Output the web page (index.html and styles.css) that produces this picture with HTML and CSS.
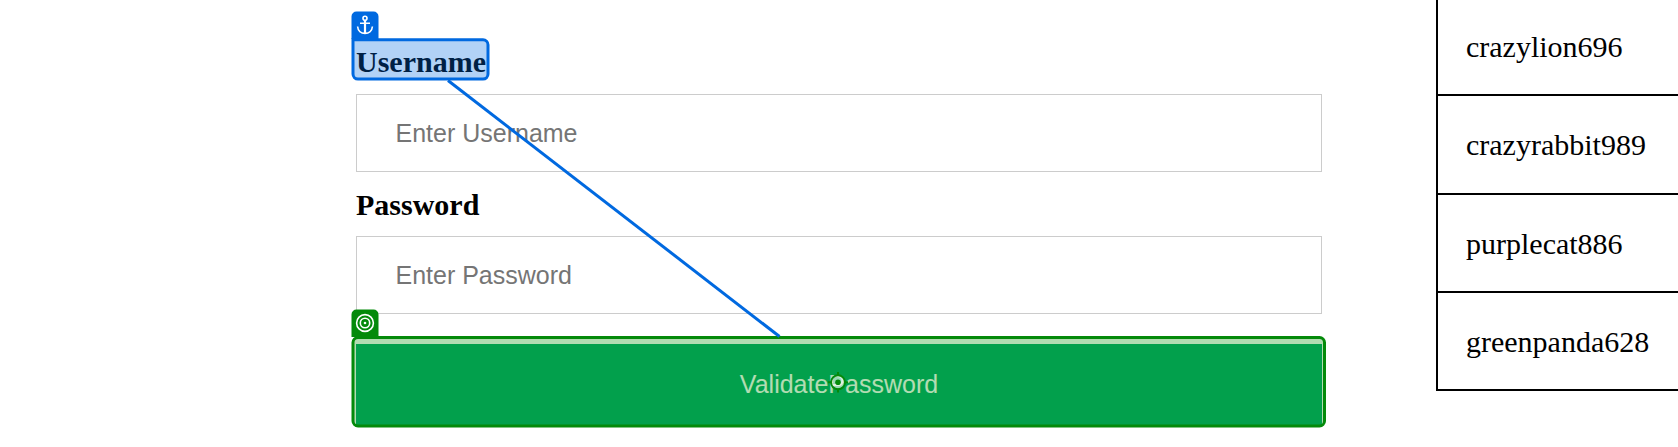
FILE: index.html
```
<!DOCTYPE html>
<html lang="en">
<head>
<meta charset="utf-8">
<title>Login</title>
<link rel="stylesheet" href="styles.css">
</head>
<body>
<main class="page">
  <form class="login">
    <label class="label" for="user">Username</label>
    <input class="field" id="user" type="text" placeholder="Enter Username">
    <label class="label" for="pass">Password</label>
    <input class="field" id="pass" type="password" placeholder="Enter Password">
    <button class="submit" type="button">ValidatePassword</button>
  </form>
  <div class="users">
    <div class="user user-first">crazylion696</div>
    <div class="user user-second">crazyrabbit989</div>
    <div class="user">purplecat886</div>
    <div class="user">greenpanda628</div>
  </div>
</main>
<svg class="overlay" width="1678" height="447" viewBox="0 0 1678 447">
  <!-- target highlight -->
  <rect class="target-box" x="353" y="337.5" width="971.5" height="88.5" rx="5"/>
  <path class="target-badge" d="M351.5 337v-22.500a5 5 0 0 1 5-5h17a5 5 0 0 1 5 5V337z"/>
  <g class="glyph">
    <circle cx="365" cy="323" r="8.400"/>
    <circle cx="365" cy="323" r="4.700"/>
    <circle class="dot" cx="365" cy="323" r="1.300"/>
  </g>
  <!-- anchor highlight -->
  <path class="anchor-box" d="M353 39.800h130a5 5 0 0 1 5 5v29.300a5 5 0 0 1-5 5H358a5 5 0 0 1-5-5z"/>
  <path class="anchor-badge" d="M351.500 39V16.500a5 5 0 0 1 5-5h17a5 5 0 0 1 5 5V39z"/>
  <g class="glyph">
    <circle cx="365" cy="18.300" r="2"/>
    <path class="stem" d="M365 20.500V33"/>
    <path d="M360 23.200h10M357.600 26.500c.3 4.300 3.400 6.900 7.400 6.900s7.100-2.600 7.400-6.900"/>
  </g>
  <path class="link" d="M448 80.500 779.500 336.500"/>
  <!-- click point -->
  <circle class="point" cx="838" cy="382.300" r="7"/>
  <path class="point-ticks" d="M838 372v4M838 388.500v4M828 382.300h4M844 382.300h4"/>
  <circle class="point-dot" cx="838" cy="382.300" r="2.800"/>
</svg>
</body>
</html>
```
FILE: styles.css
```
body {
  margin: 0;
  background: #fff;
  color: #000;
  font: 30px/34px "Liberation Serif", "Times New Roman", serif;
  overflow: hidden;
}
.page {
  display: flex;
  align-items: flex-start;
  gap: 114px;
  height: 447px;
  padding-left: 356px;
}
.login {
  display: flex;
  flex-direction: column;
  flex: 0 0 966px;
  padding-top: 30px;
}
.label {
  padding: 15px 0;
  font-weight: bold;
}
.label ~ .label { padding: 16px 0 14px; }
.field {
  box-sizing: border-box;
  height: 78px;
  margin: 0;
  padding: 0 38.500px;
  border: 1px solid #ccc;
  border-radius: 0;
  background: #fff;
  font: 25px "Liberation Sans", Arial, sans-serif;
}
.field::placeholder { color: #757575; }
.submit {
  height: 81.500px;
  margin: 30px 0 0;
  padding: 0;
  border: 0;
  background: #04aa6d;
  color: #fff;
  font: 25px "Liberation Sans", Arial, sans-serif;
}
.users {
  flex: 0 0 240px;
  border-left: 2px solid #000;
}
.user {
  box-sizing: border-box;
  height: 98px;
  padding: 32px 0 0 28px;
  border-bottom: 2px solid #000;
}
.user-first { height: 96px; padding-top: 30px; }
.user-second { height: 99px; }
.overlay {
  position: absolute;
  top: 0;
  left: 0;
  pointer-events: none;
}
.target-box { fill: rgba(0, 138, 0, .3); stroke: #048a0a; stroke-width: 3; }
.target-badge { fill: #048a0a; }
.anchor-box { fill: rgba(0, 105, 224, .3); stroke: #0069e0; stroke-width: 3; }
.anchor-badge { fill: #0069e0; }
.glyph { fill: none; stroke: #fff; stroke-width: 1.600; }
.stem { stroke-width: 2.200; }
.dot { fill: #fff; stroke: none; }
.link { stroke: #0069e0; stroke-width: 3; }
.point { fill: rgba(255, 255, 255, .6); stroke: #048a0a; stroke-width: 2; }
.point-ticks { stroke: #048a0a; stroke-width: 2; }
.point-dot { fill: #048a0a; }
```
